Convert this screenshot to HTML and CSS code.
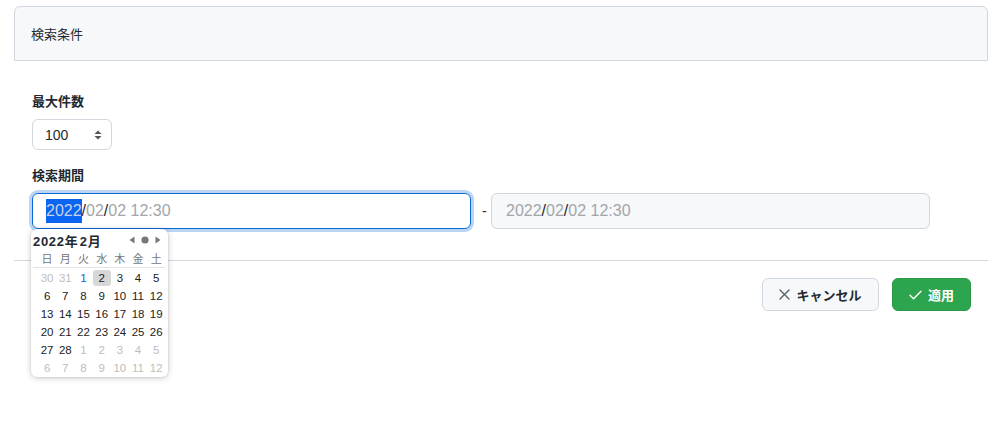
FILE: index.html
```html
<!DOCTYPE html>
<html lang="ja">
<head>
<meta charset="utf-8">
<link rel="stylesheet" href="styles.css">
</head>
<body>
<div class="page">
  <div class="card-header">検索条件</div>
  <div class="card-body">
    <div class="field">
      <div class="label">最大件数</div>
      <div class="select">
        <span>100</span>
        <svg class="spin" width="8" height="10" viewBox="0 0 8 10"><path d="M4 0.5 L7.5 4 H0.5 Z M4 9.5 L7.5 6 H0.5 Z" fill="#555"/></svg>
      </div>
    </div>
    <div class="field period">
      <div class="label">検索期間</div>
      <div class="range">
        <div class="dt focused">
          <span class="sel">2022</span><span class="sep">/</span><span class="seg">02</span><span class="sep">/</span><span class="seg">02 12:30</span>
        </div>
        <span class="dash">-</span>
        <div class="dt disabled">
          <span class="seg">2022</span><span class="sep">/</span><span class="seg">02</span><span class="sep">/</span><span class="seg">02 12:30</span>
        </div>
      </div>
      <div class="cal">
        <div class="cal-head">
          <span class="cal-title">2022年 2月</span>
          <span class="cal-nav">
            <svg width="6" height="8" viewBox="0 0 6 8"><path d="M5.5 0.5 V7.5 L0.5 4 Z" fill="#777"/></svg>
            <svg width="8" height="8" viewBox="0 0 8 8"><circle cx="4" cy="4" r="3.6" fill="#777"/></svg>
            <svg width="6" height="8" viewBox="0 0 6 8"><path d="M0.5 0.5 V7.5 L5.5 4 Z" fill="#777"/></svg>
          </span>
        </div>
        <div class="cal-grid wk">
          <span>日</span><span>月</span><span>火</span><span>水</span><span>木</span><span>金</span><span>土</span>
        </div>
        <div class="cal-grid days">
          <span class="o">30</span><span class="o">31</span><span class="today">1</span><span class="picked">2</span><span>3</span><span>4</span><span>5</span>
          <span>6</span><span>7</span><span>8</span><span>9</span><span>10</span><span>11</span><span>12</span>
          <span>13</span><span>14</span><span>15</span><span>16</span><span>17</span><span>18</span><span>19</span>
          <span>20</span><span>21</span><span>22</span><span>23</span><span>24</span><span>25</span><span>26</span>
          <span>27</span><span>28</span><span class="o">1</span><span class="o">2</span><span class="o">3</span><span class="o">4</span><span class="o">5</span>
          <span class="o">6</span><span class="o">7</span><span class="o">8</span><span class="o">9</span><span class="o">10</span><span class="o">11</span><span class="o">12</span>
        </div>
      </div>
    </div>
  </div>
  <div class="card-footer">
    <button class="btn cancel">
      <svg width="11" height="11" viewBox="0 0 11 11"><path d="M1 1 L10 10 M10 1 L1 10" stroke="#57606a" stroke-width="1.4" stroke-linecap="round"/></svg>
      キャンセル
    </button>
    <button class="btn apply">
      <svg width="13" height="10" viewBox="0 0 13 10"><path d="M1 5.2 L4.6 8.8 L12 1.2" stroke="#fff" stroke-width="1.4" fill="none" stroke-linecap="round" stroke-linejoin="round"/></svg>
      適用
    </button>
  </div>
</div>
</body>
</html>
```

FILE: styles.css
```css
* { box-sizing: border-box; }
html, body { min-height: 100%; }
body {
  margin: 0;
  min-height: 428px;
  background: #fff;
  font-family: "Liberation Sans", "Noto Sans CJK JP", sans-serif;
  color: #24292f;
}
.page {
  margin: 6px 17px 0 14px;
  min-height: 410px;
}
.card-header {
  height: 55px;
  background: #f6f8fa;
  border: 1px solid #d0d7de;
  border-radius: 6px 6px 0 0;
  padding: 0 16px;
  display: flex;
  align-items: center;
  font-size: 13px;
}
.card-body {
  padding: 31px 18px 31px;
  border-bottom: 1px solid #d0d7de;
  position: relative;
  z-index: 2;
}
.field { display: flex; flex-direction: column; align-items: flex-start; }
.label {
  font-size: 13px;
  font-weight: 600;
  line-height: 20px;
}
.select {
  margin-top: 7px;
  width: 80px;
  height: 31px;
  border: 1px solid #d0d7de;
  border-radius: 6px;
  display: flex;
  align-items: center;
  justify-content: space-between;
  padding: 0 9px 0 12px;
  font-size: 14px;
}
.period { margin-top: 16px; position: relative; align-items: stretch; }
.range {
  margin-top: 7px;
  display: flex;
  align-items: center;
}
.dt {
  width: 439px;
  height: 36px;
  border: 1px solid #d0d7de;
  border-radius: 6px;
  display: flex;
  align-items: center;
  padding: 0 13px;
  font-size: 16px;
  color: #a2a6ab;
}
.dt.focused {
  border: 1.5px solid #0969da;
  box-shadow: 0 0 0 3px rgba(9, 105, 218, 0.28);
}
.dt.disabled {
  background: #f6f8fa;
  padding-left: 14px;
}
.sel {
  background: #0a66f2;
  color: #c8d2e6;
  padding: 2px 0;
  line-height: 20px;
}
.sep { color: #24292f; }
.dash {
  width: 20px;
  text-align: left;
  font-size: 14px;
  padding-left: 11px;
}
.cal {
  position: absolute;
  z-index: 5;
  left: -1px;
  top: 63px;
  width: 137px;
  height: 148px;
  background: #fff;
  border-radius: 6px;
  box-shadow: 0 1px 6px rgba(0, 0, 0, 0.22), 0 0 0 0.5px rgba(0, 0, 0, 0.08);
  padding: 0 3px 0 7px;
}
.cal-head {
  height: 20px;
  margin-top: 1px;
  display: flex;
  align-items: center;
  justify-content: space-between;
  margin-left: -5px;
}
.cal-title {
  font-size: 13px;
  font-weight: 700;
  letter-spacing: 0.7px;
  word-spacing: -3px;
}
.cal-nav {
  display: flex;
  align-items: center;
  gap: 6px;
  margin-right: 4px;
}
.cal-grid {
  display: grid;
  grid-template-columns: repeat(7, 18.2px);
  font-size: 11.5px;
  text-align: center;
}
.cal-grid span { display: block; }
.wk {
  height: 18px;
  line-height: 18px;
  color: #777;
  font-size: 11px;
  border-bottom: 1px solid #e3e3e3;
  margin-left: -5px;
  padding-left: 5px;
}
.days { margin-top: 1px; }
.days span {
  height: 18px;
  line-height: 18px;
  color: #222;
}
.days span.o { color: #bdbdbd; }
.days span.today { color: #0a66d8; }
.days span.picked {
  background: #d7d7d7;
  border-radius: 3px;
  height: 16px;
  line-height: 16px;
  margin-top: 1px;
}
.card-footer {
  display: flex;
  justify-content: flex-end;
  gap: 13px;
  padding: 17px 17px 0 0;
}
.btn {
  height: 33px;
  border-radius: 6px;
  font-family: inherit;
  font-size: 13px;
  font-weight: 600;
  display: flex;
  align-items: center;
  justify-content: center;
  gap: 6px;
  cursor: pointer;
}
.cancel {
  width: 117px;
  background: #f6f8fa;
  border: 1px solid #d0d7de;
  color: #24292f;
}
.apply {
  width: 79px;
  background: #2da44e;
  border: 1px solid #2a9a49;
  color: #fff;
}
```
